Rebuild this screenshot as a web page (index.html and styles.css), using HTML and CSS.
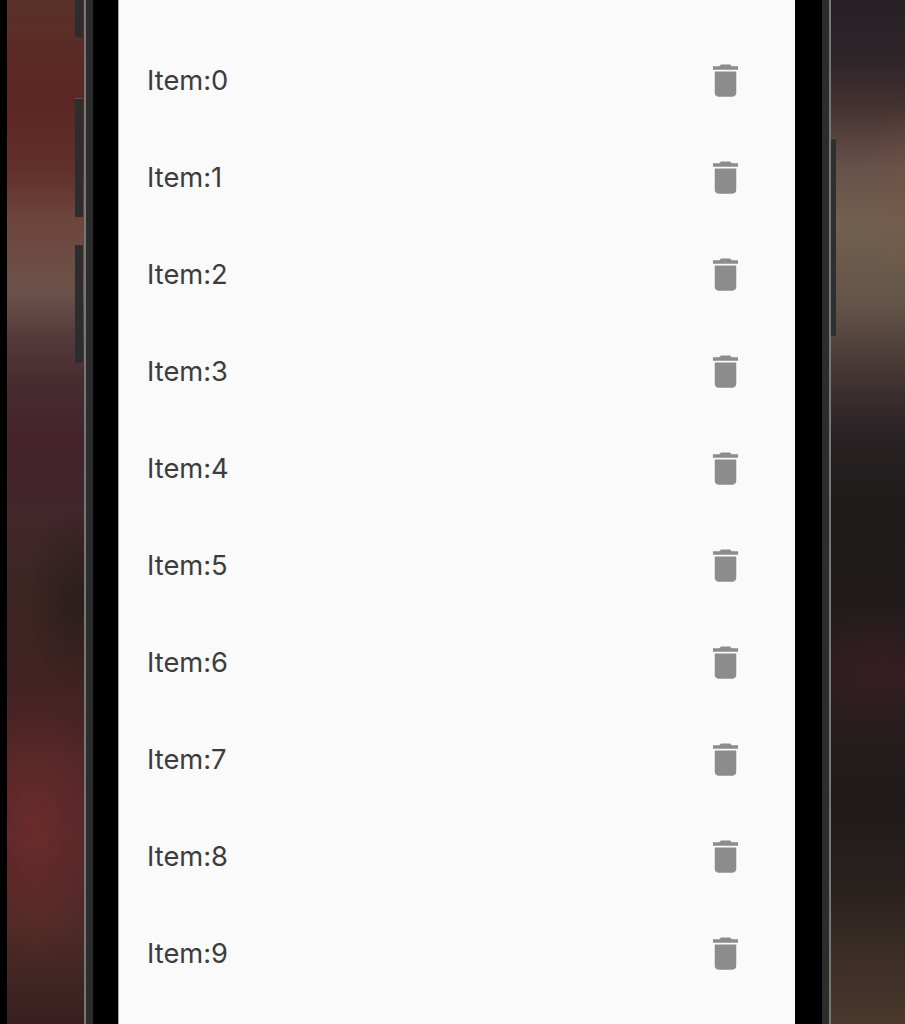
FILE: index.html

```html
<!DOCTYPE html>
<html lang="en">

<head>
  <meta charset="UTF-8">
  <meta name="viewport" content="width=device-width, initial-scale=1.0">
  <title>Item list</title>
  <link rel="stylesheet" href="styles.css">
</head>

<body>

  <svg class="icon-defs" width="0" height="0" aria-hidden="true">
    <symbol id="trash" viewBox="0 0 24 24">
      <path d="M6 19c0 1.1.9 2 2 2h8c1.1 0 2-.9 2-2V7H6v12zM19 4h-3.5l-1-1h-5l-1 1H5v2h14V4z" />
    </symbol>
  </svg>

  <div class="stage">
    <div class="edge"></div>

    <div class="wall wall-left">
      <span class="side-btn side-btn-a"></span>
      <span class="side-btn side-btn-b"></span>
      <span class="side-btn side-btn-c"></span>
    </div>

    <div class="phone">
      <div class="rim rim-left"></div>
      <div class="bezel"></div>

      <main class="screen">
        <ul class="list">
          <li class="row"><span>Item:0</span><svg class="trash"><use href="#trash" /></svg></li>
          <li class="row"><span>Item:1</span><svg class="trash"><use href="#trash" /></svg></li>
          <li class="row"><span>Item:2</span><svg class="trash"><use href="#trash" /></svg></li>
          <li class="row"><span>Item:3</span><svg class="trash"><use href="#trash" /></svg></li>
          <li class="row"><span>Item:4</span><svg class="trash"><use href="#trash" /></svg></li>
          <li class="row"><span>Item:5</span><svg class="trash"><use href="#trash" /></svg></li>
          <li class="row"><span>Item:6</span><svg class="trash"><use href="#trash" /></svg></li>
          <li class="row"><span>Item:7</span><svg class="trash"><use href="#trash" /></svg></li>
          <li class="row"><span>Item:8</span><svg class="trash"><use href="#trash" /></svg></li>
          <li class="row"><span>Item:9</span><svg class="trash"><use href="#trash" /></svg></li>
        </ul>
      </main>

      <div class="bezel bezel-right"></div>
      <div class="rim rim-right"></div>
    </div>

    <div class="wall wall-right">
      <span class="side-btn side-btn-power"></span>
    </div>
  </div>

</body>

</html>
```

FILE: styles.css

```css
html,
body {
  margin: 0;
  height: 100%;
  overflow: hidden;
  background: #000;
}

.icon-defs {
  position: absolute;
}

.stage {
  display: flex;
  width: 905px;
  height: 1024px;
}

.edge {
  width: 7px;
  background: #000;
}

.wall {
  position: relative;
}

.wall-left {
  width: 77px;
  background:
    radial-gradient(ellipse 75px 130px at 28px 830px, rgba(112, 44, 42, 0.8), rgba(112, 44, 42, 0)),
    radial-gradient(ellipse 50px 90px at 70px 600px, rgba(40, 30, 28, 0.85), rgba(40, 30, 28, 0)),
    linear-gradient(to bottom,
      #5a312a 0,
      #5c2623 100px,
      #61302b 170px,
      #6e453d 220px,
      #6b5249 290px,
      #55393a 340px,
      #482c30 380px,
      #44232b 440px,
      #41262a 520px,
      #3c2522 600px,
      #422222 690px,
      #4e2627 760px,
      #52262a 830px,
      #4c2a26 930px,
      #37201f 1024px);
}

.wall-right {
  flex: 1;
  background:
    radial-gradient(ellipse 90px 60px at 50px 670px, rgba(58, 30, 36, 0.7), rgba(58, 30, 36, 0)),
    radial-gradient(ellipse 50px 90px at 80px 190px, rgba(120, 84, 66, 0.4), rgba(120, 84, 66, 0)),
    linear-gradient(to bottom,
      #272126 0,
      #2e2529 60px,
      #44312f 105px,
      #66504a 165px,
      #72604f 225px,
      #655549 300px,
      #443533 375px,
      #2b2325 430px,
      #1e1b1b 500px,
      #211b1c 600px,
      #2c1e20 680px,
      #241c1c 760px,
      #1f1b1a 800px,
      #28201d 880px,
      #3d2e28 960px,
      #4a372c 1024px);
}

/* hardware buttons sit over the wallpaper, against the frame */
.side-btn {
  position: absolute;
  display: block;
  background: #2d2d2d;
  box-shadow: 0 -1px 0 #5c5555;
}

.side-btn-a {
  right: 1px;
  top: -10px;
  width: 8px;
  height: 47px;
}

.side-btn-b {
  right: 1px;
  top: 99px;
  width: 8px;
  height: 118px;
}

.side-btn-c {
  right: 1px;
  top: 245px;
  width: 8px;
  height: 118px;
}

.side-btn-power {
  left: 0;
  top: 139px;
  width: 5px;
  height: 197px;
  background: #2e3030;
}

.phone {
  display: flex;
  width: 747px;
}

.rim {
  width: 9px;
  background: #2c2c2c;
}

.rim-left {
  border-left: 2px solid #777;
  box-sizing: border-box;
}

.rim-right {
  border-right: 2px solid #777;
  box-sizing: border-box;
}

.bezel {
  width: 26px;
  background: #000;
}

.bezel-right {
  width: 27px;
}

.screen {
  width: 676px;
  background: #fafafa;
  box-shadow: -1px 0 0 #a8a8a8;
  overflow: hidden;
}

.list {
  list-style: none;
  margin: 0;
  padding: 31.5px 0 0;
}

.row {
  display: flex;
  align-items: center;
  justify-content: space-between;
  height: 97.1px;
  padding: 0 48px 0 28px;
  font-family: Inter, "Noto Sans", sans-serif;
  font-size: 27.3px;
  color: #3c3c3c;
}

.trash {
  width: 43px;
  height: 43px;
  fill: #8c8c8c;
}
```
